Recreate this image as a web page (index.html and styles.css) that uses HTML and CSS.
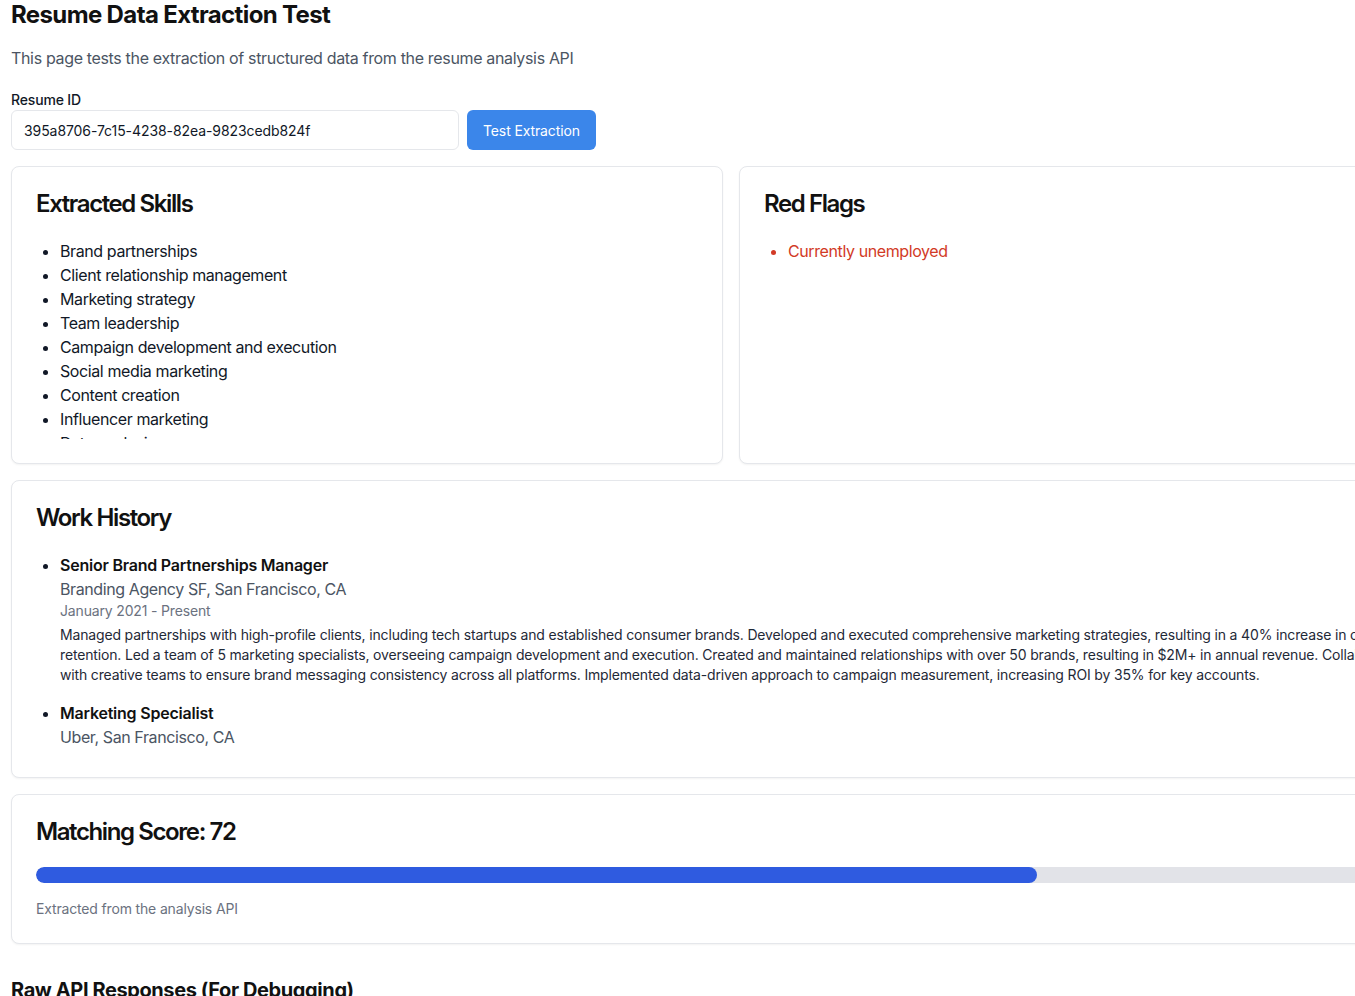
FILE: index.html
```html
<!DOCTYPE html>
<html lang="en">
<head>
<meta charset="utf-8">
<title>Resume Data Extraction Test</title>
<link rel="stylesheet" href="styles.css">
</head>
<body>
<div class="page">
  <h1 class="title">Resume Data Extraction Test</h1>
  <p class="subtitle">This page tests the extraction of structured data from the resume analysis API</p>

  <div class="form">
    <label class="label" for="rid">Resume ID</label>
    <div class="form-row">
      <input id="rid" class="input" type="text" value="395a8706-7c15-4238-82ea-9823cedb824f">
      <button class="btn" type="button">Test Extraction</button>
    </div>
  </div>

  <div class="grid">
    <section class="card">
      <h2 class="card-title">Extracted Skills</h2>
      <ul class="list scroll">
        <li>Brand partnerships</li>
        <li>Client relationship management</li>
        <li>Marketing strategy</li>
        <li>Team leadership</li>
        <li>Campaign development and execution</li>
        <li>Social media marketing</li>
        <li>Content creation</li>
        <li>Influencer marketing</li>
        <li>Data analysis</li>
        <li>Budget management</li>
      </ul>
    </section>
    <section class="card">
      <h2 class="card-title">Red Flags</h2>
      <ul class="list flags">
        <li>Currently unemployed</li>
      </ul>
    </section>
  </div>

  <section class="card">
    <h2 class="card-title">Work History</h2>
    <ul class="list jobs">
      <li class="job">
        <p class="job-title">Senior Brand Partnerships Manager</p>
        <p class="job-company">Branding Agency SF, San Francisco, CA</p>
        <p class="job-date">January 2021 - Present</p>
        <p class="job-desc">Managed partnerships with high-profile clients, including tech startups and established consumer brands. Developed and executed comprehensive marketing strategies, resulting in a 40% increase in client retention. Led a team of 5 marketing specialists, overseeing campaign development and execution. Created and maintained relationships with over 50 brands, resulting in $2M+ in annual revenue. Collaborated with creative teams to ensure brand messaging consistency across all platforms. Implemented data-driven approach to campaign measurement, increasing ROI by 35% for key accounts.</p>
      </li>
      <li class="job">
        <p class="job-title">Marketing Specialist</p>
        <p class="job-company">Uber, San Francisco, CA</p>
        <p class="job-desc"></p>
      </li>
    </ul>
  </section>

  <section class="card">
    <h2 class="card-title">Matching Score: 72</h2>
    <div class="bar"><div class="bar-fill" style="width:72%"></div></div>
    <p class="note">Extracted from the analysis API</p>
  </section>

  <h3 class="raw-title">Raw API Responses (For Debugging)</h3>
</div>
</body>
</html>
```

FILE: styles.css
```css
html {
  scrollbar-width: none;
}
html::-webkit-scrollbar { display: none; }

* { box-sizing: border-box; }

body {
  margin: 0;
  font-family: Inter, "Noto Sans", "Liberation Sans", sans-serif;
  letter-spacing: -0.025em;
  color: #111827;
  background: #ffffff;
}

.page {
  width: 1440px;
  margin-left: 11px;
  display: flex;
  flex-direction: column;
  gap: 16px;
}

.title {
  margin: -1px 0 0;
  font-size: 24px;
  line-height: 32px;
  font-weight: 700;
  letter-spacing: -0.63px;
  color: #111111;
}

.subtitle {
  margin: -1px 0 0;
  font-size: 16px;
  line-height: 24px;
  letter-spacing: -0.34px;
  color: #4b5563;
}

.form {
  display: flex;
  flex-direction: column;
  gap: 0;
  margin-top: 3px;
}

.label {
  font-size: 14px;
  line-height: 21px;
  font-weight: 500;
  letter-spacing: -0.16px;
  color: #111827;
}

.form-row {
  display: flex;
  gap: 8px;
}

.input {
  width: 448px;
  height: 40px;
  padding: 0 12px;
  border: 1px solid #e5e7eb;
  border-radius: 6px;
  font-family: inherit;
  letter-spacing: -0.08px;
  font-size: 14px;
  color: #111827;
  outline: none;
}

.btn {
  height: 40px;
  padding: 0 16px;
  border: 0;
  border-radius: 6px;
  background: #3b86ea;
  color: #ffffff;
  font-family: inherit;
  letter-spacing: -0.12px;
  font-size: 14px;
  font-weight: 400;
}

.grid {
  display: grid;
  grid-template-columns: 1fr 1fr;
  gap: 16px;
}

.card {
  border: 1px solid #e5e7eb;
  border-radius: 8px;
  padding: 24px;
  background: #fff;
  box-shadow: 0 1px 2px rgba(0, 0, 0, 0.05);
}

.card-title {
  margin: 0 0 22px;
  font-size: 24px;
  line-height: 26px;
  font-weight: 600;
  letter-spacing: -1.4px;
  color: #111111;
}

.list {
  margin: 0;
  padding-left: 24px;
  list-style: disc;
  font-size: 16px;
  line-height: 24px;
  color: #111827;
}

.scroll {
  max-height: 200px;
  overflow: hidden;
}

.flags {
  color: #d23a26;
}

.jobs {
  display: flex;
  flex-direction: column;
  gap: 16px;
}

.job p { margin: 0; }

.job-title {
  font-weight: 600;
  letter-spacing: -0.22px;
  color: #111111;
}

.job-company {
  color: #4b5563;
}

.job-date {
  font-size: 14px;
  line-height: 20px;
  letter-spacing: -0.16px;
  color: #6b7280;
}

.job .job-desc {
  margin-top: 4px;
  font-size: 14px;
  line-height: 20px;
  letter-spacing: -0.16px;
  color: #1f2937;
}

.bar {
  height: 16px;
  background: #e2e3e8;
  border-radius: 9999px;
  overflow: hidden;
}

.bar-fill {
  height: 100%;
  background: #2f5be0;
  border-radius: 9999px;
}

.note {
  margin: 16px 0 0;
  font-size: 14px;
  line-height: 20px;
  letter-spacing: -0.16px;
  color: #6b7280;
}

.raw-title {
  margin: 16px 0 0;
  font-size: 20px;
  line-height: 28px;
  font-weight: 700;
  color: #111111;
}
```
